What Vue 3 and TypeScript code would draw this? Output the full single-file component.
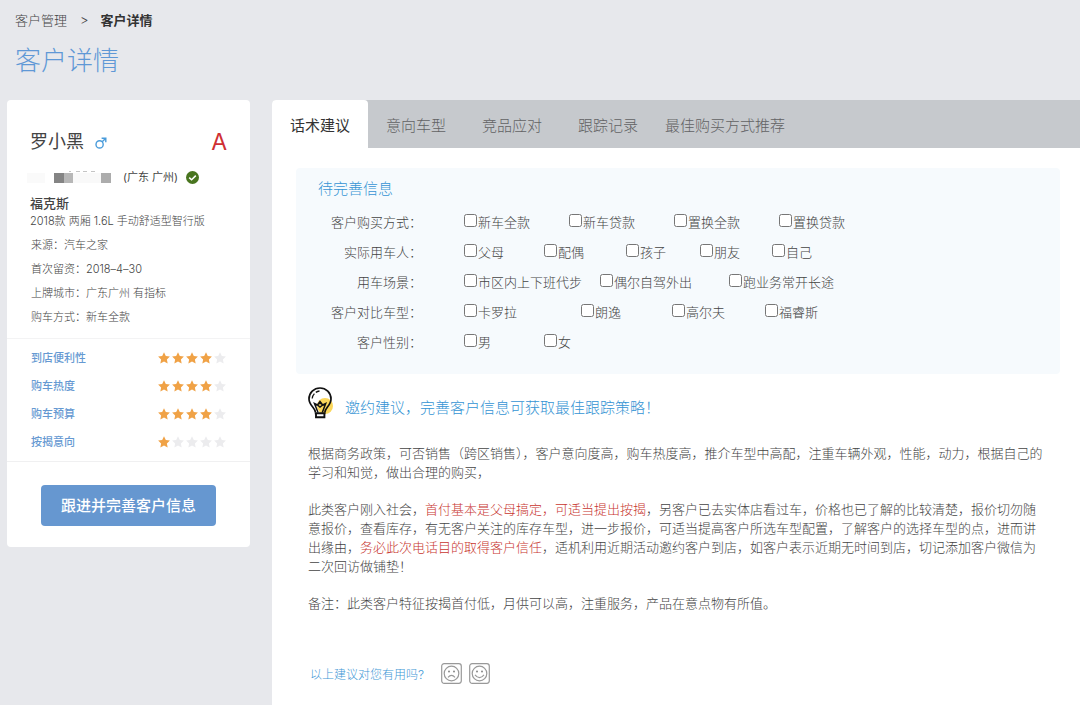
<script setup lang="ts">
import { ref } from 'vue'

interface Rating {
  label: string
  score: number
}

interface Question {
  key: string
  label: string
  options: string[]
}

const facts: [string, string][] = [
  ['来源', '汽车之家'],
  ['首次留资', '2018–4–30'],
  ['上牌城市', '广东广州 有指标'],
  ['购车方式', '新车全款'],
]

const ratings: Rating[] = [
  { label: '到店便利性', score: 4 },
  { label: '购车热度', score: 4 },
  { label: '购车预算', score: 4 },
  { label: '按揭意向', score: 1 },
]

const tabs = ['话术建议', '意向车型', '竞品应对', '跟踪记录', '最佳购买方式推荐']
const activeTab = ref(0)

const questions: Question[] = [
  { key: 'payment', label: '客户购买方式', options: ['新车全款', '新车贷款', '置换全款', '置换贷款'] },
  { key: 'driver', label: '实际用车人', options: ['父母', '配偶', '孩子', '朋友', '自己'] },
  { key: 'scene', label: '用车场景', options: ['市区内上下班代步', '偶尔自驾外出', '跑业务常开长途'] },
  { key: 'rival', label: '客户对比车型', options: ['卡罗拉', '朗逸', '高尔夫', '福睿斯'] },
  { key: 'gender', label: '客户性别', options: ['男', '女'] },
]
const checked = ref<string[]>([])
</script>

<template>
  <div class="page">
    <header class="head">
      <nav class="crumbs" aria-label="breadcrumb">
        <a href="#">客户管理</a>
        <span class="sep">&gt;</span>
        <strong>客户详情</strong>
      </nav>
      <h1>客户详情</h1>
    </header>

    <div class="columns">
      <aside class="card">
        <section class="profile">
          <div class="name-row">
            <h2>罗小黑</h2>
            <svg class="male" viewBox="0 0 12 12" aria-label="男">
              <circle cx="4.6" cy="7.4" r="3.6" />
              <path d="M7.2 4.8 L10.8 1.2 M6.6 1.2 H10.8 V5.2" />
            </svg>
            <span class="grade">A</span>
          </div>
          <div class="phone-row">
            <svg class="mask" viewBox="0 0 96 16" aria-hidden="true">
              <rect x="0" y="4" width="18" height="10" fill="#fafafa" />
              <rect x="27" y="4" width="10" height="10" fill="#848484" />
              <rect x="37" y="4" width="9" height="10" fill="#b7b7b7" />
              <rect x="46" y="4" width="28" height="10" fill="#f9f9f9" />
              <rect x="74" y="4" width="10" height="10" fill="#acacac" />
              <path d="M42 2.5h2M49 2.5h4M56 2.5h4M64 2.5h4" stroke="#c4c4c4" stroke-width="1" />
            </svg>
            <span>(广东 广州)</span>
            <svg class="verified" viewBox="0 0 13 13" aria-hidden="true">
              <circle cx="6.5" cy="6.5" r="6.5" fill="#49751f" />
              <path d="M3.2 6.6 L5.6 8.8 L9.8 4.6" fill="none" stroke="#fff" stroke-width="1.5" />
            </svg>
          </div>
          <h3>福克斯</h3>
          <p class="model">2018款 两厢 1.6L 手动舒适型智行版</p>
          <p v-for="[k, v] in facts" :key="k" class="fact">{{ k }}：{{ v }}</p>
        </section>

        <ul class="ratings">
          <li v-for="r in ratings" :key="r.label">
            <span>{{ r.label }}</span>
            <span class="stars">
              <svg v-for="n in 5" :key="n" viewBox="0 0 24 24" :class="{ on: n <= r.score }">
                <path d="M12 0.5 L15.6 8 L23.8 9.1 L17.8 14.8 L19.3 23 L12 19 L4.7 23 L6.2 14.8 L0.2 9.1 L8.4 8 Z" />
              </svg>
            </span>
          </li>
        </ul>

        <div class="action">
          <button type="button">跟进并完善客户信息</button>
        </div>
      </aside>

      <main class="main">
        <div class="tabs" role="tablist">
          <button
            v-for="(t, i) in tabs"
            :key="t"
            type="button"
            role="tab"
            :aria-selected="i === activeTab"
            :class="{ active: i === activeTab }"
            @click="activeTab = i"
          >{{ t }}</button>
        </div>

        <section class="panel">
          <h2>待完善信息</h2>
          <div v-for="q in questions" :key="q.key" class="question" role="group" :aria-label="q.label">
            <span class="q-label">{{ q.label }}：</span>
            <div class="options" :class="q.key">
              <label v-for="o in q.options" :key="o">
                <input v-model="checked" type="checkbox" :value="q.key + o" />
                <span>{{ o }}</span>
              </label>
            </div>
          </div>
        </section>

        <section class="advice">
          <div class="advice-head">
            <svg class="bulb" viewBox="0 0 25 32" aria-hidden="true">
              <circle cx="17" cy="19" r="8" fill="#fbd75b" />
              <g fill="none" stroke="#111" stroke-width="1.7">
                <path d="M7.5 25.5 C7.5 21 1 18.5 1 12 A11 11 0 0 1 23 12 C23 18.5 16.8 21 16.8 25.5" />
                <path d="M4.2 11.5 A8 8 0 0 1 6.4 6.6 M7.8 5.4 A8 8 0 0 1 11.5 4" stroke-width="1.3" />
                <path d="M10 25.5 L6.5 16.5 L9.5 18 L12 14.5 L14.7 18 L17.7 16.5 L14.3 25.5 M8.2 18.3 L12 16 L16 18.3 M9.5 18 L12 20 L14.7 18" stroke-width="1.5" />
                <path d="M6.8 26.2 H17.6 M8 27 V30.2 H16.4 V27" stroke-width="1.9" />
              </g>
            </svg>
            <h2>邀约建议，完善客户信息可获取最佳跟踪策略！</h2>
          </div>
          <p>根据商务政策，可否销售（跨区销售），客户意向度高，购车热度高，推介车型中高配，注重车辆外观，性能，动力，根据自己的学习和知觉，做出合理的购买，</p>
          <p>此类客户刚入社会，<em>首付基本是父母搞定，可适当提出按揭</em>，另客户已去实体店看过车，价格也已了解的比较清楚，报价切勿随意报价，查看库存，有无客户关注的库存车型，进一步报价，可适当提高客户所选车型配置，了解客户的选择车型的点，进而讲出缘由，<em>务必此次电话目的取得客户信任</em>，适机利用近期活动邀约客户到店，如客户表示近期无时间到店，切记添加客户微信为二次回访做铺垫！</p>
          <p>备注：此类客户特征按揭首付低，月供可以高，注重服务，产品在意点物有所值。</p>

          <div class="feedback">
            <span>以上建议对您有用吗?</span>
            <button type="button" aria-label="没用">
              <svg viewBox="0 0 21 21">
                <rect x="0.7" y="0.7" width="19.6" height="19.6" rx="2.5" />
                <circle cx="10.5" cy="10.5" r="7.3" />
                <path d="M7 14.3 Q10.5 10.3 14 14.3" />
                <circle class="eye" cx="8" cy="8.5" r="1" />
                <circle class="eye" cx="13" cy="8.5" r="1" />
              </svg>
            </button>
            <button type="button" aria-label="有用">
              <svg viewBox="0 0 21 21">
                <rect x="0.7" y="0.7" width="19.6" height="19.6" rx="2.5" />
                <circle cx="10.5" cy="10.5" r="7.3" />
                <path d="M6 11.8 Q10.5 17.3 15 11.8" />
                <circle class="eye" cx="8" cy="8.5" r="1" />
                <circle class="eye" cx="13" cy="8.5" r="1" />
              </svg>
            </button>
          </div>
        </section>
      </main>
    </div>
  </div>
</template>

<style>
body {
  margin: 0;
  background: #e7e8ec;
}
</style>

<style scoped>
* {
  box-sizing: border-box;
}
.page {
  display: flex;
  flex-direction: column;
  min-height: 100vh;
  background: #e7e8ec;
  color: #444;
  font-family: Inter, 'Noto Sans CJK SC', sans-serif;
  font-weight: 300;
  font-size: 13px;
}
h1,
h2,
h3,
p,
ul {
  margin: 0;
  padding: 0;
  font-weight: inherit;
}
button {
  margin: 0;
  padding: 0;
  border: 0;
  background: none;
  font: inherit;
  color: inherit;
  cursor: pointer;
}
.head {
  padding: 10px 15px 0;
  height: 100px;
}
.crumbs {
  display: flex;
  line-height: 20px;
}
.crumbs a {
  color: #444;
  text-decoration: none;
}
.sep {
  margin: 0 12px 0 13px;
}
.crumbs strong {
  font-weight: 700;
  color: #333;
}
h1 {
  margin-top: 13px;
  font-size: 26px;
  line-height: 36px;
  color: #5f98d6;
}
.columns {
  display: flex;
  flex: 1;
  align-items: flex-start;
  gap: 22px;
  padding-left: 7px;
}
.card {
  flex: none;
  width: 243px;
  background: #fff;
  border-radius: 4px;
}
.profile {
  padding: 28px 23px 9px;
}
.name-row {
  display: flex;
  align-items: center;
  line-height: 28px;
}
.name-row h2 {
  font-size: 18px;
  font-weight: 400;
  color: #444;
}
.male {
  width: 12px;
  height: 12px;
  margin: 2px 0 0 11px;
  fill: none;
  stroke: #4a9cdb;
  stroke-width: 1.4;
}
.grade {
  margin-left: auto;
  font-size: 23px;
  font-weight: 400;
  color: #cf2f33;
}
.phone-row {
  display: flex;
  align-items: center;
  margin: 11px 0 7px -3px;
  font-size: 11px;
  font-weight: 400;
  line-height: 20px;
}
.mask {
  width: 96px;
  height: 16px;
}
.verified {
  width: 13px;
  height: 13px;
  margin-left: 8px;
}
h3 {
  font-size: 13px;
  font-weight: 500;
  line-height: 18px;
}
.model,
.fact {
  font-size: 11px;
  line-height: 24px;
  white-space: nowrap;
}
.model {
  margin-bottom: 3px;
  line-height: 18px;
}
.fact {
  padding-left: 1px;
}
.ratings {
  padding: 5px 24px;
  border-top: 1px solid #f3f3f4;
  border-bottom: 1px solid #f0f0f1;
  list-style: none;
}
.ratings li {
  display: flex;
  align-items: center;
  justify-content: space-between;
  font-size: 11px;
  font-weight: 500;
  line-height: 28px;
  color: #6699d2;
}
.stars {
  display: flex;
  gap: 2px;
}
.stars svg {
  width: 12px;
  height: 12px;
  fill: #ececee;
}
.stars .on {
  fill: #f0a246;
}
.action {
  padding: 23px 34px 21px;
}
.action button {
  width: 100%;
  border-radius: 4px;
  background: #6697d0;
  color: #fff;
  font-size: 15px;
  font-weight: 500;
  line-height: 41px;
}
.main {
  flex: 1;
  align-self: stretch;
  min-width: 0;
  background: #fff;
  border-top-left-radius: 4px;
}
.tabs {
  display: flex;
  background: #c6c9cd;
  border-top-left-radius: 4px;
}
.tabs button {
  min-width: 96px;
  padding: 4px 9px 0;
  font-size: 15px;
  line-height: 44px;
  white-space: nowrap;
  color: #626264;
}
.tabs .active {
  background: #fff;
  border-radius: 4px 4px 0 0;
  font-weight: 400;
  color: #333;
}
.panel {
  margin: 20px 20px 0 24px;
  padding: 11px 22px 17px;
  border-radius: 4px;
  background: #f6fafd;
}
.panel h2 {
  margin-bottom: 8px;
  font-size: 15px;
  line-height: 20px;
  color: #3594d4;
}
.question {
  display: flex;
  line-height: 30px;
}
.q-label {
  flex: none;
  width: 104px;
  text-align: right;
}
.options {
  display: grid;
  flex: 1;
  margin-left: 42px;
}
.payment {
  grid-template-columns: 105px 105px 105px auto;
}
.driver {
  grid-template-columns: 80px 82px 74px 72px auto;
}
.scene {
  grid-template-columns: 136px 129px auto;
}
.rival {
  grid-template-columns: 117px 91px 93px auto;
}
.gender {
  grid-template-columns: 80px auto;
}
.options label {
  display: flex;
  align-items: center;
  gap: 1px;
  white-space: nowrap;
}
.options input {
  width: 13px;
  height: 13px;
  margin: 0 0 3px;
}
.advice {
  padding: 12px 34px 20px 36px;
}
.advice-head {
  display: flex;
  align-items: center;
  gap: 12px;
  margin-bottom: 24px;
}
.bulb {
  width: 25px;
  height: 32px;
}
.advice-head h2 {
  padding-top: 10px;
  font-size: 15px;
  line-height: 24px;
  color: #3594d4;
}
.advice p {
  margin-bottom: 18px;
  line-height: 19px;
}
.advice em {
  font-style: normal;
  color: #c8362f;
}
.feedback {
  display: flex;
  align-items: center;
  gap: 7px;
  margin-top: 50px;
  padding-left: 2px;
  font-size: 12px;
  color: #3f98d6;
}
.feedback span {
  margin-right: 10px;
}
.feedback button {
  width: 21px;
  height: 21px;
}
.feedback svg {
  display: block;
  width: 21px;
  height: 21px;
  fill: none;
  stroke: #999;
  stroke-width: 1.2;
}
.feedback .eye {
  fill: #888;
  stroke: none;
}
</style>
